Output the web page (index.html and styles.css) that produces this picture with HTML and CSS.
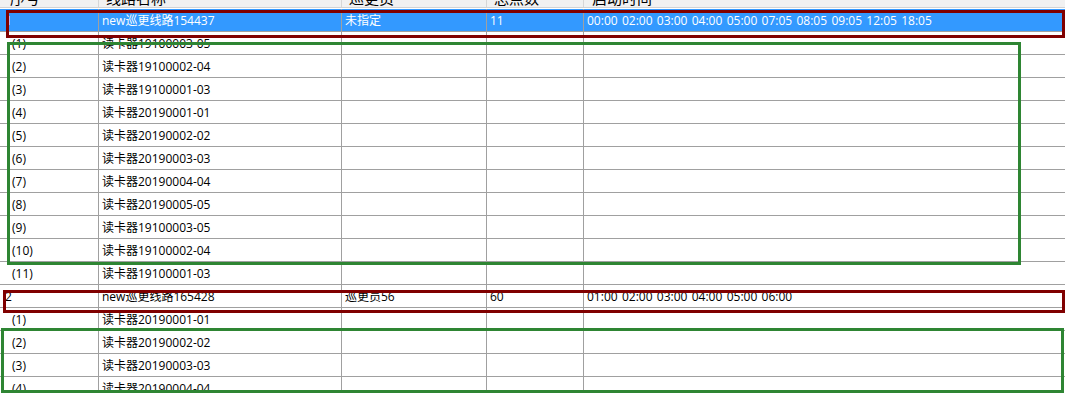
FILE: index.html
```html
<!DOCTYPE html>
<html lang="zh">
<head>
<meta charset="utf-8">
<title>巡更线路</title>
<link rel="stylesheet" href="styles.css">
</head>
<body>
<div class="view">
  <div class="grid">
    <div class="row head">
      <div class="cell c1">序号</div>
      <div class="cell c2">线路名称</div>
      <div class="cell c3">巡更员</div>
      <div class="cell c4">总点数</div>
      <div class="cell c5">启动时间</div>
    </div>
    <div class="row group selected first">
      <div class="cell c1">1</div>
      <div class="cell c2">new巡更线路154437</div>
      <div class="cell c3">未指定</div>
      <div class="cell c4">11</div>
      <div class="cell c5 times">00:00 02:00 03:00 04:00 05:00 07:05 08:05 09:05 12:05 18:05</div>
    </div>
    <div class="row child"><div class="cell c1">(1)</div><div class="cell c2">读卡器19100003-05</div><div class="cell c3"></div><div class="cell c4"></div><div class="cell c5"></div></div>
    <div class="row child"><div class="cell c1">(2)</div><div class="cell c2">读卡器19100002-04</div><div class="cell c3"></div><div class="cell c4"></div><div class="cell c5"></div></div>
    <div class="row child"><div class="cell c1">(3)</div><div class="cell c2">读卡器19100001-03</div><div class="cell c3"></div><div class="cell c4"></div><div class="cell c5"></div></div>
    <div class="row child"><div class="cell c1">(4)</div><div class="cell c2">读卡器20190001-01</div><div class="cell c3"></div><div class="cell c4"></div><div class="cell c5"></div></div>
    <div class="row child"><div class="cell c1">(5)</div><div class="cell c2">读卡器20190002-02</div><div class="cell c3"></div><div class="cell c4"></div><div class="cell c5"></div></div>
    <div class="row child"><div class="cell c1">(6)</div><div class="cell c2">读卡器20190003-03</div><div class="cell c3"></div><div class="cell c4"></div><div class="cell c5"></div></div>
    <div class="row child"><div class="cell c1">(7)</div><div class="cell c2">读卡器20190004-04</div><div class="cell c3"></div><div class="cell c4"></div><div class="cell c5"></div></div>
    <div class="row child"><div class="cell c1">(8)</div><div class="cell c2">读卡器20190005-05</div><div class="cell c3"></div><div class="cell c4"></div><div class="cell c5"></div></div>
    <div class="row child"><div class="cell c1">(9)</div><div class="cell c2">读卡器19100003-05</div><div class="cell c3"></div><div class="cell c4"></div><div class="cell c5"></div></div>
    <div class="row child"><div class="cell c1">(10)</div><div class="cell c2">读卡器19100002-04</div><div class="cell c3"></div><div class="cell c4"></div><div class="cell c5"></div></div>
    <div class="row child"><div class="cell c1">(11)</div><div class="cell c2">读卡器19100001-03</div><div class="cell c3"></div><div class="cell c4"></div><div class="cell c5"></div></div>
    <div class="row group">
      <div class="cell c1">2</div>
      <div class="cell c2">new巡更线路165428</div>
      <div class="cell c3">巡更员56</div>
      <div class="cell c4">60</div>
      <div class="cell c5 times">01:00 02:00 03:00 04:00 05:00 06:00</div>
    </div>
    <div class="row child"><div class="cell c1">(1)</div><div class="cell c2">读卡器20190001-01</div><div class="cell c3"></div><div class="cell c4"></div><div class="cell c5"></div></div>
    <div class="row child"><div class="cell c1">(2)</div><div class="cell c2">读卡器20190002-02</div><div class="cell c3"></div><div class="cell c4"></div><div class="cell c5"></div></div>
    <div class="row child"><div class="cell c1">(3)</div><div class="cell c2">读卡器20190003-03</div><div class="cell c3"></div><div class="cell c4"></div><div class="cell c5"></div></div>
    <div class="row child"><div class="cell c1">(4)</div><div class="cell c2">读卡器20190004-04</div><div class="cell c3"></div><div class="cell c4"></div><div class="cell c5"></div></div>
  </div>
  <div class="mark red mark-r1"></div>
  <div class="mark green mark-g1"></div>
  <div class="mark red mark-r2"></div>
  <div class="mark green mark-g2"></div>
</div>
</body>
</html>
```

FILE: styles.css
```css
html, body {
  margin: 0;
  padding: 0;
  background: #ffffff;
}
body {
  width: 1065px;
  height: 393px;
  overflow: hidden;
  font-family: "Open Sans", "Noto Sans CJK SC", sans-serif;
  font-size: 12px;
  color: #000000;
}
.view {
  position: relative;
  width: 1065px;
  height: 393px;
  overflow: hidden;
}
.grid {
  display: flex;
  flex-direction: column;
  margin-top: -17px;
}
.row {
  display: grid;
  grid-template-columns: 99px 243px 145px 97px 1fr;
  height: 23px;
  box-sizing: border-box;
  border-bottom: 1px solid #a0a0a0;
}
.row.first {
  height: 24px;
  border-top: 1px solid #ffffff;
}
.cell {
  box-sizing: border-box;
  border-right: 1px solid #a0a0a0;
  padding-left: 3px;
  padding-top: 2px;
  display: flex;
  align-items: center;
  white-space: nowrap;
  overflow: hidden;
  line-height: 1;
}
.cell.c5 {
  border-right: none;
}
.times {
  word-spacing: 1.2px;
}
.head {
  height: 25px;
  background: #f1f1f1;
  border-bottom: 1px solid #d2d2d2;
  font-size: 15px;
}
.head .cell {
  border-right-color: #d6d6d6;
  padding-left: 7px;
  padding-top: 6px;
}
.head .c1 {
  padding-left: 10px;
}
.head .c5 {
  padding-left: 8px;
}
.group .c1 {
  padding-left: 5px;
}
.child .c1 {
  padding-left: 12px;
}
.selected {
  background: #3399ff;
  color: #ffffff;
}
.mark {
  position: absolute;
  box-sizing: border-box;
  border: 3px solid;
  pointer-events: none;
}
.red {
  border-color: #800000;
}
.green {
  border-color: #2e8533;
}
.mark-r1 {
  left: 6px;
  top: 10px;
  width: 1059px;
  height: 28px;
}
.mark-g1 {
  left: 7px;
  top: 42px;
  width: 1014px;
  height: 223px;
}
.mark-r2 {
  left: 3px;
  top: 290px;
  width: 1062px;
  height: 23px;
}
.mark-g2 {
  left: 1px;
  top: 328px;
  width: 1063px;
  height: 65px;
}
```
